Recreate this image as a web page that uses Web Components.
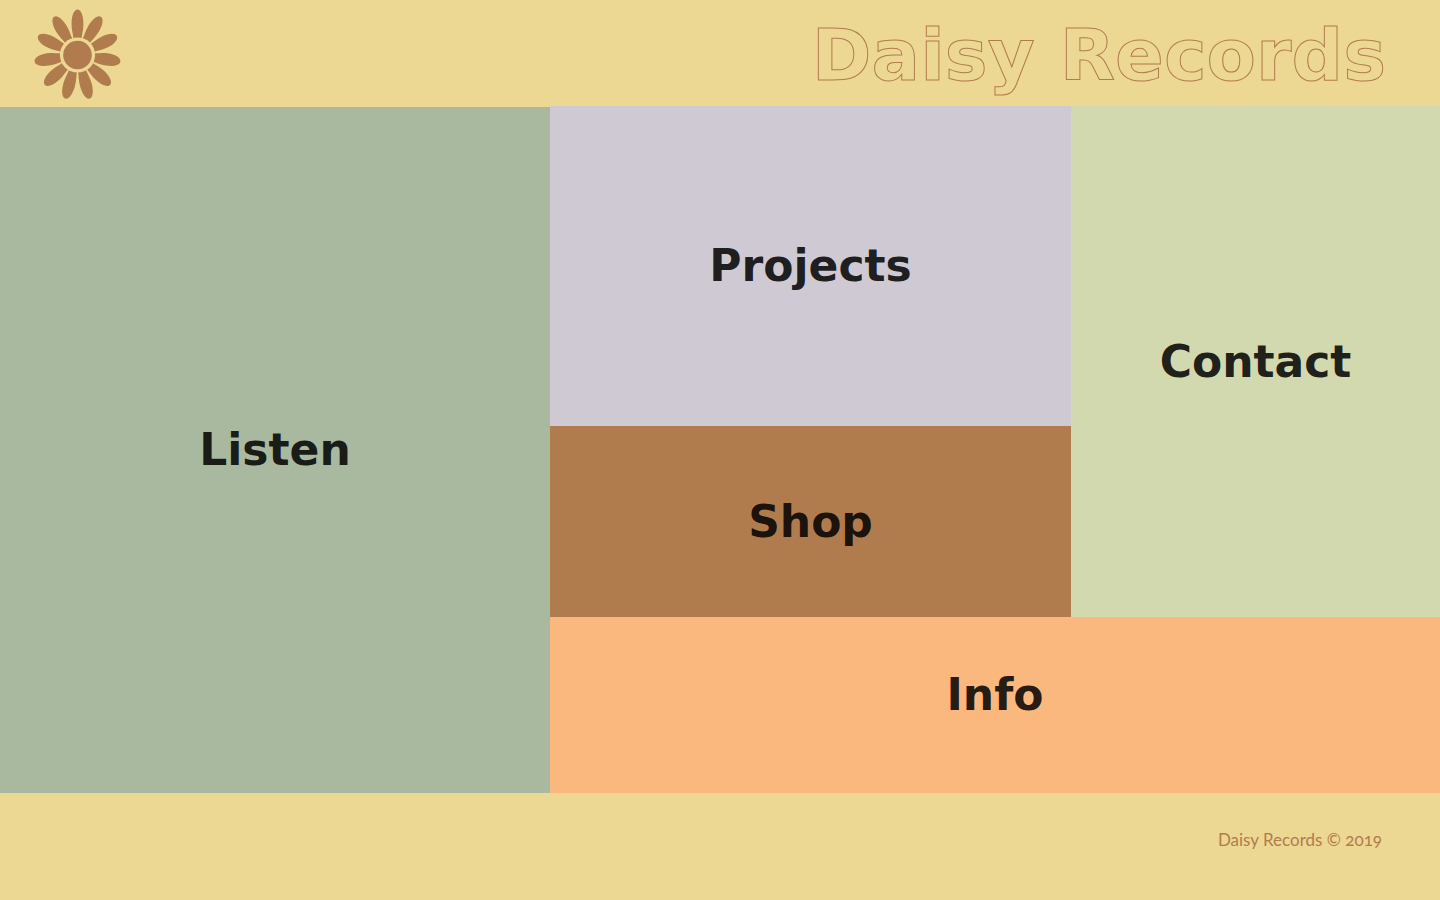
<!DOCTYPE html>
<html lang="en">
<head>
<meta charset="utf-8">
<meta name="viewport" content="width=device-width, initial-scale=1">
<title>Daisy Records</title>
<style>
  :root {
    --straw: #ecd893;
    --clay: #b07c4d;
    --sage: #a9b99f;
    --lilac: #cfc9d3;
    --lime: #d2d9ae;
    --peach: #fbb87e;
    --ink: rgba(0, 0, 0, 0.87);
    --display: "DejaVu Sans", Verdana, sans-serif;
  }
  body { margin: 0; background: var(--straw); }
</style>
</head>
<body>
<daisy-page></daisy-page>

<template id="page-template">
  <style>
    :host {
      display: grid;
      grid-template-rows: minmax(106px, auto) 1fr 107px;
      min-height: 100vh;
      background: var(--straw);
    }
    main { display: flex; }
    daisy-grid { flex: 1; }
  </style>
  <daisy-header></daisy-header>
  <main>
    <daisy-grid>
      <daisy-tile slot="listen" href="#listen">Listen</daisy-tile>
      <daisy-tile slot="projects" href="#projects">Projects</daisy-tile>
      <daisy-tile slot="contact" href="#contact">Contact</daisy-tile>
      <daisy-tile slot="shop" href="#shop">Shop</daisy-tile>
      <daisy-tile slot="info" href="#info">Info</daisy-tile>
    </daisy-grid>
  </main>
  <daisy-footer>Daisy Records © 2019</daisy-footer>
</template>

<template id="header-template">
  <style>
    :host {
      display: flex;
      align-items: center;
      justify-content: space-between;
      padding: 3px 54px 0 34px;
    }
    a { display: block; line-height: 0; }
    h1 {
      margin: 0;
      font: 700 72px/96px var(--display);
      color: transparent;
      -webkit-text-stroke: 1px var(--clay);
    }
  </style>
  <a href="#home" aria-label="Home"><daisy-logo></daisy-logo></a>
  <h1>Daisy Records</h1>
</template>

<template id="logo-template">
  <style>
    :host { display: block; }
    svg { display: block; fill: var(--clay); }
    .ring { fill: var(--straw); }
  </style>
  <svg width="87" height="92" viewBox="-43.5 -46 87 92" aria-hidden="true">
    <defs>
      <path id="petal" d="M-4.2 -16 C-4.6 -21 -6.2 -25 -6.2 -31 C-6.2 -39 -3.8 -45.4 0 -45.4 C3.8 -45.4 6.2 -39 6.2 -31 C6.2 -25 4.6 -21 4.2 -16 Z"/>
    </defs>
    <g id="petals" transform="scale(0.955 1)"></g>
    <circle class="ring" r="17.6"/>
    <circle r="14.3"/>
  </svg>
</template>

<template id="grid-template">
  <style>
    :host {
      display: grid;
      grid-template-columns: 550fr 521fr 369fr;
      grid-template-rows: 320fr 191fr 176fr;
      grid-template-areas:
        "listen projects contact"
        "listen shop contact"
        "listen info info";
    }
    div { display: flex; }
    ::slotted(*) { flex: 1; }
    .listen { grid-area: listen; background: var(--sage); margin-top: 1px; }
    .projects { grid-area: projects; background: var(--lilac); }
    .contact { grid-area: contact; background: var(--lime); }
    .shop { grid-area: shop; background: var(--clay); }
    .info { grid-area: info; background: var(--peach); padding-bottom: 20px; }
  </style>
  <div class="listen"><slot name="listen"></slot></div>
  <div class="projects"><slot name="projects"></slot></div>
  <div class="contact"><slot name="contact"></slot></div>
  <div class="shop"><slot name="shop"></slot></div>
  <div class="info"><slot name="info"></slot></div>
</template>

<template id="tile-template">
  <style>
    :host { display: flex; }
    a {
      flex: 1;
      display: flex;
      align-items: center;
      justify-content: center;
      font: 700 44px/48px var(--display);
      color: var(--ink);
      text-decoration: none;
    }
  </style>
  <a><slot></slot></a>
</template>

<template id="footer-template">
  <style>
    :host {
      display: flex;
      justify-content: flex-end;
      align-items: center;
      padding: 0 58px 14px 34px;
      font: 400 17px/24px Lato, sans-serif;
      font-variant-numeric: oldstyle-nums;
      color: var(--clay);
    }
  </style>
  <footer><slot></slot></footer>
</template>

<script>
  class TemplateElement extends HTMLElement {
    constructor() {
      super();
      const template = document.getElementById(this.constructor.template);
      this.attachShadow({ mode: "open" }).append(template.content.cloneNode(true));
    }
  }

  class DaisyLogo extends TemplateElement {
    static template = "logo-template";
    connectedCallback() {
      const petals = this.shadowRoot.getElementById("petals");
      if (petals.childElementCount) return;
      const count = 11;
      for (let i = 0; i < count; i++) {
        const petal = this.shadowRoot.getElementById("petal").cloneNode();
        petal.removeAttribute("id");
        petal.setAttribute("transform", `rotate(${(i * 360) / count})`);
        petals.append(petal);
      }
    }
  }

  class DaisyTile extends TemplateElement {
    static template = "tile-template";
    connectedCallback() {
      this.shadowRoot.querySelector("a").setAttribute("href", this.getAttribute("href"));
    }
  }

  class DaisyHeader extends TemplateElement { static template = "header-template"; }
  class DaisyGrid extends TemplateElement { static template = "grid-template"; }
  class DaisyFooter extends TemplateElement { static template = "footer-template"; }
  class DaisyPage extends TemplateElement { static template = "page-template"; }

  customElements.define("daisy-logo", DaisyLogo);
  customElements.define("daisy-tile", DaisyTile);
  customElements.define("daisy-header", DaisyHeader);
  customElements.define("daisy-grid", DaisyGrid);
  customElements.define("daisy-footer", DaisyFooter);
  customElements.define("daisy-page", DaisyPage);
</script>
</body>
</html>
